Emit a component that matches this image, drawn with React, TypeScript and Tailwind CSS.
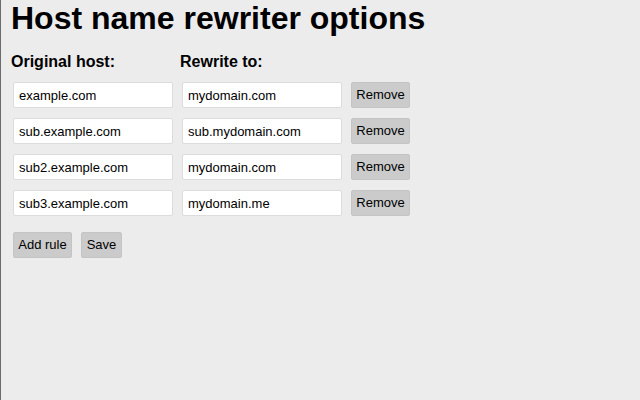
const rules = [
  { from: 'example.com', to: 'mydomain.com' },
  { from: 'sub.example.com', to: 'sub.mydomain.com' },
  { from: 'sub2.example.com', to: 'mydomain.com' },
  { from: 'sub3.example.com', to: 'mydomain.me' },
];

export default function App() {
  return (
    <div className="h-[400px] w-[640px] bg-[#ececec] border-l border-[#6b6b6b] pl-[10px] text-black font-['Liberation_Sans',Arial,sans-serif]">
      <h1 className="text-[32px] font-bold leading-none pt-[2px]">Host name rewriter options</h1>

      <div className="mt-[20px] flex text-[16px] font-bold leading-none">
        <div className="w-[169px]">Original host:</div>
        <div>Rewrite to:</div>
      </div>

      <div className="mt-[12px] pl-[2px] flex flex-col gap-[10px]">
        {rules.map((r, i) => (
          <div key={i} className="flex gap-[9px]">
            <input
              defaultValue={r.from}
              className="w-[160px] h-[26px] bg-white border border-[#dcdcdc] rounded-[2px] px-[5px] text-[13px] outline-none"
            />
            <input
              defaultValue={r.to}
              className="w-[160px] h-[26px] bg-white border border-[#dcdcdc] rounded-[2px] px-[5px] text-[13px] outline-none"
            />
            <button className="w-[59px] h-[26px] bg-[#cbcbcb] border border-[#c4c4c4] rounded-[2px] text-[13px]">
              Remove
            </button>
          </div>
        ))}
      </div>

      <div className="mt-[16px] pl-[2px] flex gap-[9px]">
        <button className="w-[59px] h-[26px] bg-[#cbcbcb] border border-[#c4c4c4] rounded-[2px] text-[13px]">
          Add rule
        </button>
        <button className="w-[41px] h-[26px] bg-[#cbcbcb] border border-[#c4c4c4] rounded-[2px] text-[13px]">
          Save
        </button>
      </div>
    </div>
  );
}
